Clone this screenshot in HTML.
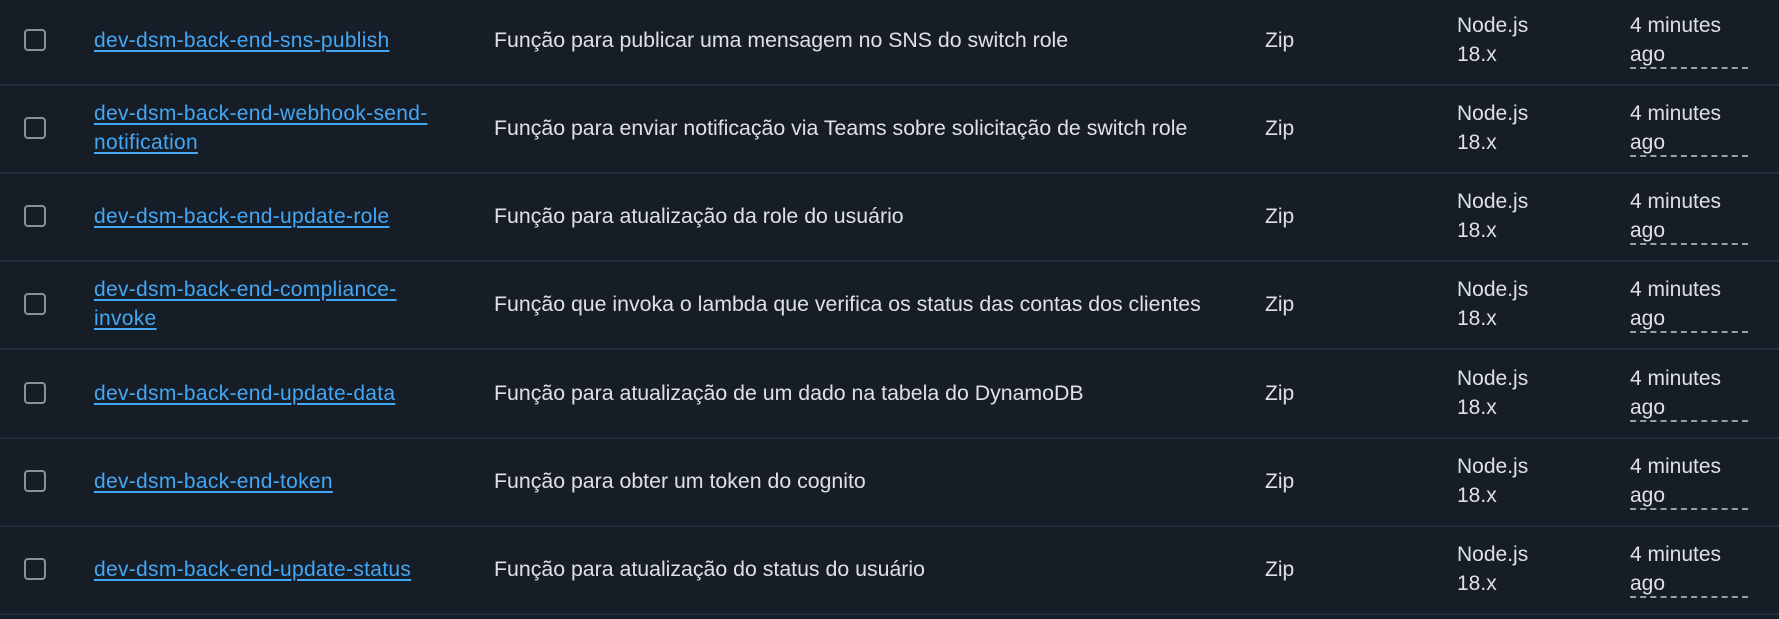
<!DOCTYPE html>
<html><head><meta charset="utf-8"><style>
html,body{margin:0;padding:0;background:#161d26;width:1779px;height:619px;overflow:hidden;font-family:"Liberation Sans",Arial,sans-serif;color:#dde1e6;}
.row{position:absolute;left:0;width:1779px;height:88px;border-bottom:2px solid #232b37;}
.cb{position:absolute;left:24px;top:50%;margin-top:-11px;width:18px;height:18px;border:2px solid #8c9199;border-radius:4px;}
.cell{position:absolute;top:0;height:88px;display:flex;align-items:center;font-size:21px;line-height:29px;}
.name{left:94px;width:380px;}
.name a{color:#42a7f5;text-decoration:underline;text-decoration-thickness:2px;text-underline-offset:3px;letter-spacing:0.3px;}
.desc{left:494px;width:760px;font-size:21.3px;}
.zip{left:1265px;}
.rt{left:1457px;}
.tm{left:1630px;width:130px;}
.ago{display:inline-block;width:118px;border-bottom:2px dashed #9aa0a8;line-height:24px;}
</style></head><body>

<div class="row" style="top:-4px"><div class="cb"></div><div class="cell name"><a>dev-dsm-back-end-sns-publish</a></div><div class="cell desc">Função para publicar uma mensagem no SNS do switch role</div><div class="cell zip">Zip</div><div class="cell rt">Node.js<br>18.x</div><div class="cell tm"><div>4 minutes<br><span class="ago">ago</span></div></div></div>

<div class="row" style="top:84px"><div class="cb"></div><div class="cell name"><div><a>dev-dsm-back-end-webhook-send-</a><br><a>notification</a></div></div><div class="cell desc">Função para enviar notificação via Teams sobre solicitação de switch role</div><div class="cell zip">Zip</div><div class="cell rt">Node.js<br>18.x</div><div class="cell tm"><div>4 minutes<br><span class="ago">ago</span></div></div></div>

<div class="row" style="top:172px"><div class="cb"></div><div class="cell name"><a>dev-dsm-back-end-update-role</a></div><div class="cell desc">Função para atualização da role do usuário</div><div class="cell zip">Zip</div><div class="cell rt">Node.js<br>18.x</div><div class="cell tm"><div>4 minutes<br><span class="ago">ago</span></div></div></div>

<div class="row" style="top:260px"><div class="cb"></div><div class="cell name"><div><a>dev-dsm-back-end-compliance-</a><br><a>invoke</a></div></div><div class="cell desc">Função que invoka o lambda que verifica os status das contas dos clientes</div><div class="cell zip">Zip</div><div class="cell rt">Node.js<br>18.x</div><div class="cell tm"><div>4 minutes<br><span class="ago">ago</span></div></div></div>

<div class="row" style="top:349px"><div class="cb"></div><div class="cell name"><a>dev-dsm-back-end-update-data</a></div><div class="cell desc">Função para atualização de um dado na tabela do DynamoDB</div><div class="cell zip">Zip</div><div class="cell rt">Node.js<br>18.x</div><div class="cell tm"><div>4 minutes<br><span class="ago">ago</span></div></div></div>

<div class="row" style="top:437px"><div class="cb"></div><div class="cell name"><a>dev-dsm-back-end-token</a></div><div class="cell desc">Função para obter um token do cognito</div><div class="cell zip">Zip</div><div class="cell rt">Node.js<br>18.x</div><div class="cell tm"><div>4 minutes<br><span class="ago">ago</span></div></div></div>

<div class="row" style="top:525px"><div class="cb"></div><div class="cell name"><a>dev-dsm-back-end-update-status</a></div><div class="cell desc">Função para atualização do status do usuário</div><div class="cell zip">Zip</div><div class="cell rt">Node.js<br>18.x</div><div class="cell tm"><div>4 minutes<br><span class="ago">ago</span></div></div></div>

</body></html>
